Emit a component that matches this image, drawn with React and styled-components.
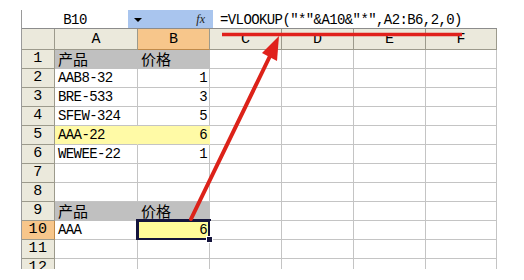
import styled, { createGlobalStyle } from "styled-components";

const GlobalStyle = createGlobalStyle`
  html, body {
    margin: 0;
    padding: 0;
    background: #ffffff;
  }
`;

const mono = `"Liberation Mono", "Noto Sans CJK SC", monospace`;

const Page = styled.div`
  position: relative;
  width: 524px;
  height: 280px;
  overflow: hidden;
  background: #ffffff;
  padding: 10px 0 0 21px;
  box-sizing: border-box;
`;

const Window = styled.div`
  width: 476px;
  height: 259px;
  overflow: hidden;
  display: flex;
  flex-direction: column;
  border-left: 1px solid #9a9a9a;
  box-sizing: border-box;
`;

const TopStrip = styled.div`
  height: 3px;
  background: #b3cae9;
`;

const FormulaRow = styled.div`
  display: flex;
  height: 18px;
  border-bottom: 1px solid #8c8c8c;
  box-sizing: content-box;
`;

const NameBox = styled.div`
  width: 106px;
  display: flex;
  align-items: center;
  justify-content: center;
  background: #ffffff;
  font-family: ${mono};
  font-size: 14px;
  letter-spacing: -0.6px;
  color: #000;
  padding-top: 2px;
  box-sizing: border-box;
`;

const ToolArea = styled.div`
  width: 85px;
  display: flex;
  align-items: center;
  justify-content: space-between;
  padding: 0 8px 0 6px;
  box-sizing: border-box;
  background: #a9c5ee;
`;

const DropArrow = styled.span`
  width: 0;
  height: 0;
  border-left: 4px solid transparent;
  border-right: 4px solid transparent;
  border-top: 4px solid #000;
  margin-top: 2px;
`;

const Fx = styled.span`
  font-family: "Liberation Serif", serif;
  font-style: italic;
  font-size: 12px;
  color: #222;
`;

const FormulaInput = styled.div`
  flex: 1;
  background: #ffffff;
  display: flex;
  align-items: center;
  padding: 2px 0 0 7px;
  box-sizing: border-box;
  font-family: ${mono};
  font-size: 14px;
  letter-spacing: -0.6px;
  color: #000;
  white-space: pre;
`;

const Sheet = styled.div`
  display: grid;
  grid-template-columns: 33px 83px 72px 72px 72px 72px 71px;
  grid-template-rows: 21px repeat(12, 19px);
`;

const Corner = styled.div`
  background: #ebe9dc;
  border-right: 1px solid #9c9a8c;
  border-bottom: 1px solid #9c9a8c;
  box-sizing: border-box;
`;

const ColHeader = styled.div`
  background: ${(p) => (p.$active ? "#f7c68b" : "#ebe9dc")};
  border-right: 1px solid #9c9a8c;
  border-bottom: 1px solid ${(p) => (p.$active ? "#c08a4a" : "#9c9a8c")};
  box-sizing: border-box;
  display: flex;
  align-items: flex-end;
  justify-content: center;
  padding-bottom: 1px;
  font-family: ${mono};
  font-size: 15px;
  color: #000;
`;

const RowHeader = styled.div`
  background: ${(p) => (p.$active ? "#f7c68b" : "#ebe9dc")};
  border-right: 1px solid ${(p) => (p.$active ? "#c08a4a" : "#9c9a8c")};
  border-bottom: 1px solid #9c9a8c;
  box-sizing: border-box;
  display: flex;
  align-items: flex-end;
  justify-content: center;
  font-family: ${mono};
  font-size: 15px;
  letter-spacing: 0.5px;
  color: #000;
  line-height: 18px;
`;

const fills = {
  none: "#ffffff",
  gray: "#c0c0c0",
  pale: "#fffaa6",
  yellow: "#fffb9a",
};

const Cell = styled.div`
  position: relative;
  background: ${(p) => fills[p.$fill || "none"]};
  border-right: 1px solid ${(p) => (p.$fill === "gray" || p.$fill === "pale" ? "transparent" : "#c4c4c4")};
  border-bottom: 1px solid ${(p) => (p.$fill === "gray" ? "transparent" : "#c4c4c4")};
  box-sizing: border-box;
  display: flex;
  align-items: flex-end;
  justify-content: ${(p) => (p.$num ? "flex-end" : "flex-start")};
  padding: 0 2px 0 3px;
  font-family: ${(p) =>
    p.$cjk ? `"Noto Sans CJK SC", sans-serif` : mono};
  font-size: ${(p) => (p.$cjk ? "15px" : "14px")};
  letter-spacing: ${(p) => (p.$cjk ? "0" : "-0.6px")};
  line-height: 18px;
  color: #000;
  white-space: nowrap;

  ${(p) =>
    p.$selected &&
    `
    &::after {
      content: "";
      position: absolute;
      left: -2px;
      top: -2px;
      right: -2px;
      bottom: -2px;
      border: 3px solid #14143c;
    }
    &::before {
      content: "";
      position: absolute;
      right: -4px;
      bottom: -4px;
      width: 5px;
      height: 5px;
      background: #14143c;
      border: 1px solid #ffffff;
      z-index: 2;
    }
  `}
`;

const Overlay = styled.svg`
  position: absolute;
  left: 0;
  top: 0;
  pointer-events: none;
`;

const columns = ["A", "B", "C", "D", "E", "F"];

const rows = [
  { a: "产品", b: "价格", fill: "gray", cjk: true },
  { a: "AAB8-32", b: "1" },
  { a: "BRE-533", b: "3" },
  { a: "SFEW-324", b: "5" },
  { a: "AAA-22", b: "6", fill: "pale" },
  { a: "WEWEE-22", b: "1" },
  {},
  {},
  { a: "产品", b: "价格", fill: "gray", cjk: true },
  { a: "AAA", b: "6", selected: true },
  {},
  {},
];

const App = () => {
  return (
    <Page>
      <GlobalStyle />
      <Window>
        <TopStrip />
        <FormulaRow>
          <NameBox>B10</NameBox>
          <ToolArea>
            <DropArrow />
            <Fx>fx</Fx>
          </ToolArea>
          <FormulaInput>=VLOOKUP("*"&amp;A10&amp;"*",A2:B6,2,0)</FormulaInput>
        </FormulaRow>
        <Sheet>
          <Corner />
          {columns.map((c) => (
            <ColHeader key={c} $active={c === "B"}>
              {c}
            </ColHeader>
          ))}
          {rows.map((r, i) => (
            <Row key={i} index={i + 1} row={r} />
          ))}
        </Sheet>
      </Window>
      <Overlay width="524" height="280" viewBox="0 0 524 280">
        <line x1="222" y1="34.5" x2="462" y2="34.5" stroke="#e0211c" strokeWidth="3.5" />
        <line x1="191" y1="219" x2="270" y2="56" stroke="#dc2219" strokeWidth="4" strokeLinecap="round" />
        <polygon points="279,36 262,53 277,61" fill="#e0211c" />
      </Overlay>
    </Page>
  );
};

const Row = ({ index, row }) => {
  const selected = row.selected;
  return (
    <>
      <RowHeader $active={selected}>{index}</RowHeader>
      <Cell $fill={row.fill} $cjk={row.cjk}>
        {row.a}
      </Cell>
      <Cell
        $fill={selected ? "yellow" : row.fill}
        $cjk={row.cjk}
        $num={!row.cjk}
        $selected={selected}
      >
        {row.b}
      </Cell>
      <Cell />
      <Cell />
      <Cell />
      <Cell />
    </>
  );
};

export default App;
